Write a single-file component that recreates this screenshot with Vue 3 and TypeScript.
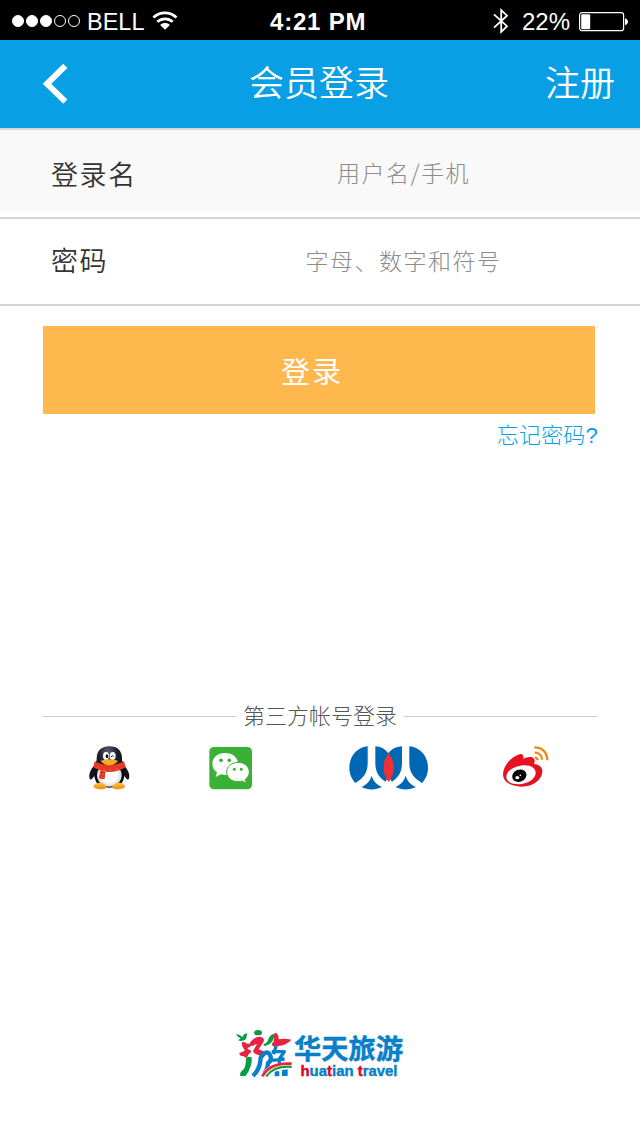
<script setup lang="ts">
import { ref } from 'vue'

const account = ref<string>('')
const password = ref<string>('')
const signalDots: boolean[] = [true, true, true, false, false]
</script>

<template>
  <main class="screen">
    <header class="status">
      <div class="dots">
        <i v-for="(on, i) in signalDots" :key="i" :class="['dot', { on }]"></i>
      </div>
      <span class="carrier">BELL</span>
      <svg class="wifi" width="26" height="20" viewBox="0 0 26 20" fill="none" stroke="#fff" stroke-width="2.7">
        <path d="M1.4 6.6C8 .3 17.8.3 24.5 6.6M5.3 10.8c4.5-4 11-4 15.4 0" />
        <path d="M8.2 13.9c2.7-2.4 7-2.4 9.7 0L13 18.8Z" fill="#fff" stroke="none" />
      </svg>
      <span class="time">4:21 PM</span>
      <svg class="bluetooth" width="16" height="28" viewBox="0 0 16 28" fill="none" stroke="#fff" stroke-width="1.8">
        <path d="M1 7.3 14 19.2 8.2 24.8V3.2L14 8.7 1 20.7" />
      </svg>
      <span class="percent">22%</span>
      <svg class="battery" width="50" height="20" viewBox="0 0 50 20">
        <rect x=".6" y=".7" width="44" height="18" rx="2.5" fill="none" stroke="#fff" stroke-width="1.2" />
        <rect x="2.2" y="2.2" width="9" height="15" rx="1" fill="#fff" />
        <path d="M46 6.2c4 1.6 4 5.4 0 7Z" fill="#fff" />
      </svg>
    </header>

    <nav class="nav">
      <button class="back" aria-label="返回">
        <svg width="26" height="42" viewBox="0 0 26 42"><path d="M23.3 2.8 5 20.8 23.3 38.6" fill="none" stroke="#fff" stroke-width="6" /></svg>
      </button>
      <h1>会员登录</h1>
      <a class="register">注册</a>
    </nav>

    <form @submit.prevent>
      <label class="row first">
        <span>登录名</span>
        <input v-model="account" type="text" placeholder="用户名/手机" />
      </label>
      <label class="row second">
        <span>密码</span>
        <input v-model="password" type="password" placeholder="字母、数字和符号" />
      </label>
      <button class="submit" type="submit">登录</button>
      <a class="forgot">忘记密码<b>?</b></a>
    </form>

    <section class="third">
      <div class="divider"><hr /><span>第三方帐号登录</span><hr /></div>
      <div class="icons">
        <svg class="qq" width="60" height="65" viewBox="0 0 180 195">
          <defs>
            <radialGradient id="body" cx="45%" cy="15%" r="70%"><stop offset="0" stop-color="#62627a" /><stop offset=".4" stop-color="#20202d" /><stop offset="1" stop-color="#07080f" /></radialGradient>
            <radialGradient id="belly"><stop offset=".6" stop-color="#fff" /><stop offset="1" stop-color="#d5d8df" /></radialGradient>
            <linearGradient id="foot" x2="0" y2="1"><stop stop-color="#ffce32" /><stop offset="1" stop-color="#ef8514" /></linearGradient>
          </defs>
          <path d="M43 91C31 104 24 122 30 133c6 2 10-7 17-17M131 91c13 12 21 30 15 42-6 2-10-7-17-17" fill="#11121c" />
          <path d="M88 34C61 34 49 50 50 76 38 97 39 137 57 150q31 17 62 0c18-13 20-52 7-74C128 50 115 34 88 34Z" fill="url(#body)" />
          <ellipse cx="88" cy="121" rx="37" ry="34" fill="url(#belly)" />
          <path d="M57 143c-15 2-20 13-10 17 13 4 31 2 34-4-4-8-13-11-24-13ZM119 143c15 2 20 13 10 17-13 4-31 2-34-4 4-8 13-11 24-13Z" fill="url(#foot)" stroke="#e58b19" />
          <ellipse cx="78" cy="63" rx="9" ry="12" fill="#fff" /><ellipse cx="98" cy="63" rx="9" ry="12" fill="#fff" />
          <ellipse cx="81" cy="64" rx="4" ry="6" fill="#111" /><path d="M93 66q4-8 8-1" fill="none" stroke="#111" stroke-width="3" />
          <path d="M62 77q26-9 52 0-8 13-26 14-18-1-26-14Z" fill="#f6ac1d" />
          <path d="M44 79q43 24 88 0l5 18q-48 28-97 0Z" fill="#e93822" />
          <path d="M61 107 76 110 74 131q-9 3-17-1Z" fill="#dc2d20" />
          <path d="m53 96 6 4m10 3 7 2m11 0 8 0m10-2 8-2M61 117l13 2m-13 7 12 1" stroke="#ff7954" stroke-width="2" />
        </svg>
        <svg class="wechat" width="60" height="65" viewBox="0 0 180 195">
          <rect x="28" y="36" width="128" height="127" rx="14" fill="#3ab034" />
          <path d="M75 54c-22 0-38 14-38 32 0 11 5 20 14 26l-4 14 16-8c7 2 14 3 22 1 9-1 29-15 29-33 0-18-16-32-39-32Z" fill="#fff" />
          <path d="M114 82c-19 0-34 13-34 29 0 17 15 29 34 29 5 0 9-1 13-2l12 7-3-12c7-5 12-13 12-22 0-16-15-29-34-29Z" fill="#fff" stroke="#3ab034" stroke-width="3" />
          <g fill="#3ab034"><circle cx="63" cy="76" r="5.5" /><circle cx="88" cy="76" r="5.5" /><circle cx="103" cy="103" r="4.5" /><circle cx="124" cy="103" r="4.5" /></g>
        </svg>
        <svg class="renren" width="100" height="65" viewBox="0 0 300 195">
          <g fill="#0067b5">
            <path d="M83 34C51 37 28 64 28 98c0 18 7 34 18 46 25-14 37-31 37-59Z" />
            <path d="M106 34c17 1 30 9 39 21 9-12 23-20 41-21v51c0 26-11 43-30 55l-10-15-10 15c-19-12-30-29-30-55Z" />
            <path d="M208 34c32 3 56 30 56 64 0 18-7 34-18 46-25-14-38-31-38-59Z" />
            <path d="M95 122c-4 15-15 27-31 34 19 10 43 10 62 0-16-7-27-19-31-34ZM197 122c-4 15-15 27-31 34 19 10 43 10 62 0-16-7-27-19-31-34Z" />
          </g>
          <path d="M146 55c-20 24-21 62 0 86 21-24 20-62 0-86Z" fill="#ef3034" />
        </svg>
        <svg class="weibo" width="70" height="65" viewBox="0 0 210 195">
          <path d="M85 59c9-5 18 0 15 13 11-7 26-8 31-2 5 5 3 11 1 17 16 2 25 10 25 21 0 26-27 47-62 47-33 0-56-15-56-37 0-23 22-51 46-59Z" fill="#e81122" />
          <path d="M91 92c25-5 45 4 46 20 1 17-17 31-42 35-25 3-45-5-46-20-1-17 16-30 42-35Z" fill="#fff" />
          <ellipse cx="88" cy="122" rx="22" ry="18" transform="rotate(-22 88 122)" fill="#050505" />
          <ellipse cx="82" cy="128" rx="6" ry="5" fill="#fff" /><circle cx="91" cy="121" r="2.5" fill="#fff" />
          <path d="M133 37c22-1 39 14 39 39M134 53c13 0 22 8 22 21M134 68c6 0 9 3 9 8" fill="none" stroke="#f18616" stroke-width="7" />
        </svg>
      </div>
    </section>

    <footer class="brand">
      <svg width="190" height="65" viewBox="0 0 190 65">
        <g transform="translate(7 6) scale(.3333)">
          <g fill="#069c44">
            <path d="M12 25q14 1 19 9 2-10 15-12-2 8-3 14-3 8-13 8-6 2-11-1l7-7q-10-2-14-11Z" />
            <ellipse cx="78" cy="20" rx="12" ry="8" />
            <path d="M94 54q12-2 15-14 4-12 15-16l8 3q-8 8-9 16-9 15-26 17Z" />
            <path d="M42 96q9-7 17-2 3 27-18 56H25q-3-10 7-18 10-5 10-36Z" />
          </g>
          <g fill="#e62342">
            <path d="M29 49q11-4 15 4 9-2 14 5-2 7-12 8 2 5 11 8 1 8-7 9 0 7-8 13-6-6-10-6-10 0-10-10 10 0 17-7-9-8-10-24Z" />
            <path d="M58 45q12-15 30-12 13 5 5 17L80 70l16 6q5 10-2 18l-15-7q-16-4-16-12l12-21-7 2q-6 6-13 2-4-8 3-13Z" />
            <path d="M127 22q8-3 12 7l1 11q17-4 38 1-12 15-37 19-11 4-19 0-6-8 3-13Z" />
          </g>
          <g fill="none" stroke="#087fc8" stroke-width="13" stroke-linejoin="round">
            <path d="M63 150q22-21 23-55 18-26 28-8 8 15-6 24-1 19-12 31" />
            <path d="M119 77h38l-15 22v12M132 61l-7 24M121 103l37-4M133 132v19M155 128v22" stroke-width="10" />
          </g>
          <path d="M84 151q24-47 96-41v40h-23v-19q-35 2-46 20Z" fill="#fff" />
          <path d="M91 151q22-42 88-38" fill="none" stroke="#e62342" stroke-width="8" />
          <path d="M98 151q23-36 80-32" fill="none" stroke="#f5d36b" stroke-width="3" />
          <path d="M103 151q23-32 76-28" fill="none" stroke="#069c44" stroke-width="6" />
          <path d="M132 140l10-5v15h-10ZM153 132l14-2v20h-14Z" fill="#087fc8" />
        </g>
        <text class="brand-cn" x="69" y="38.5" textLength="109" lengthAdjust="spacingAndGlyphs">华天旅游</text>
        <text class="brand-en" x="75.5" y="55.5" textLength="97" lengthAdjust="spacingAndGlyphs"><tspan class="red">h</tspan>ua<tspan class="red">t</tspan>ian <tspan class="red">t</tspan>ravel</text>
      </svg>
    </footer>
  </main>
</template>

<style>
body { margin: 0; background: #fff; }
</style>

<style scoped>
.screen { width: 640px; height: 1136px; overflow: hidden; display: flex; flex-direction: column; background: #fff; color: #333; font-family: "Liberation Sans", "Noto Sans CJK SC", sans-serif; font-weight: 300; }
button { border: 0; padding: 0; background: none; font: inherit; }
.status { height: 40px; flex: none; display: flex; align-items: center; background: #000; color: #fff; font-size: 24px; line-height: 40px; white-space: nowrap; }
.status > * { flex: none; }
.dots { display: flex; gap: 2px; margin: 2px 0 0 12px; width: 68px; }
.dot { box-sizing: border-box; width: 12px; height: 12px; border: 1px solid #fff; border-radius: 50%; }
.dot.on { background: #fff; }
.carrier { width: 67px; margin-left: 7px; padding-top: 4px; font-size: 23.5px; }
.wifi { margin: 1px 0 0 -2px; }
.time { width: 98px; margin-left: 92px; padding-top: 4px; font-weight: 700; font-size: 24px; letter-spacing: .8px; }
.bluetooth { margin: 2px 0 0 125px; }
.percent { width: 52px; margin-left: 13px; padding-top: 4px; }
.battery { margin: 3px 0 0 5px; }
.nav { box-sizing: border-box; height: 88px; flex: none; display: grid; grid-template-columns: 160px 1fr 160px; align-items: center; background: #099fe4; color: #fff; font: 350 35px/50px "Noto Sans CJK SC", sans-serif; }
.back { width: 26px; height: 42px; margin-left: 42px; }
.back svg { display: block; }
h1 { margin: 0 2px 7px 0; font: inherit; text-align: center; }
.register { margin: 0 25px 7px 0; text-align: right; }
form { height: 322px; flex: none; display: flex; flex-direction: column; }
.row { box-sizing: border-box; flex: none; display: flex; align-items: center; border-bottom: 2px solid #d5d5d5; font-family: "Noto Sans CJK SC", sans-serif; }
.row span { width: 130px; margin-left: 51px; font-size: 27px; font-weight: 350; line-height: 40px; letter-spacing: 1.6px; }
.row input { box-sizing: border-box; width: 445px; height: 40px; padding: 0; border: 0; outline: 0; background: transparent; text-align: center; font: 300 23px/40px "Noto Sans CJK SC", sans-serif; letter-spacing: 1.5px; }
.row input::placeholder { color: #8c8c8c; opacity: 1; }
.first { height: 91px; border-top: 2px solid #d5d5d5; background: linear-gradient(#f9f9f9 83px, #fff 83px); }
.first input { margin-bottom: 4px; }
.second { height: 87px; }
.second span, .second input { margin-bottom: 3px; }
.submit { flex: none; width: 552px; height: 88px; margin: 20px 0 0 43px; padding-right: 14px; background: #ffb84e; color: #fff; font: 400 29px/86px "Noto Sans CJK SC", sans-serif; letter-spacing: 2px; }
.forgot { flex: none; height: 32px; align-self: flex-end; margin: 3px 42px 0 0; color: #099fe4; font: 300 22px/32px "Noto Sans CJK SC", sans-serif; letter-spacing: .2px; }
.forgot b { font: 300 22px/1 "Liberation Sans", sans-serif; }
.third { margin-top: 249px; flex: none; }
.divider { height: 34px; display: flex; align-items: center; padding: 0 43px; color: #555; font: 300 22px/34px "Noto Sans CJK SC", sans-serif; }
.divider hr { flex: 1; height: 1px; margin: 0; border: 0; background: #ccc; }
.divider span { width: 168px; padding-bottom: 4px; box-sizing: border-box; text-align: center; }
.icons { display: flex; padding: 2px 0 0 80px; }
.icons svg { flex: none; }
.wechat { margin-left: 60px; }
.renren { margin-left: 80px; }
.weibo { margin-left: 50px; }
.brand { margin: auto 0 51px 225px; height: 65px; }
.brand svg { display: block; }
.brand-cn { fill: #087fc8; font: 700 27px "Noto Sans CJK SC", sans-serif; stroke: #087fc8; stroke-width: .5px; }
.brand-en { fill: #087fc8; font: 700 14px "Liberation Sans", sans-serif; stroke: #087fc8; stroke-width: .4px; }
.red { fill: #e60020; stroke: #e60020; }
</style>
